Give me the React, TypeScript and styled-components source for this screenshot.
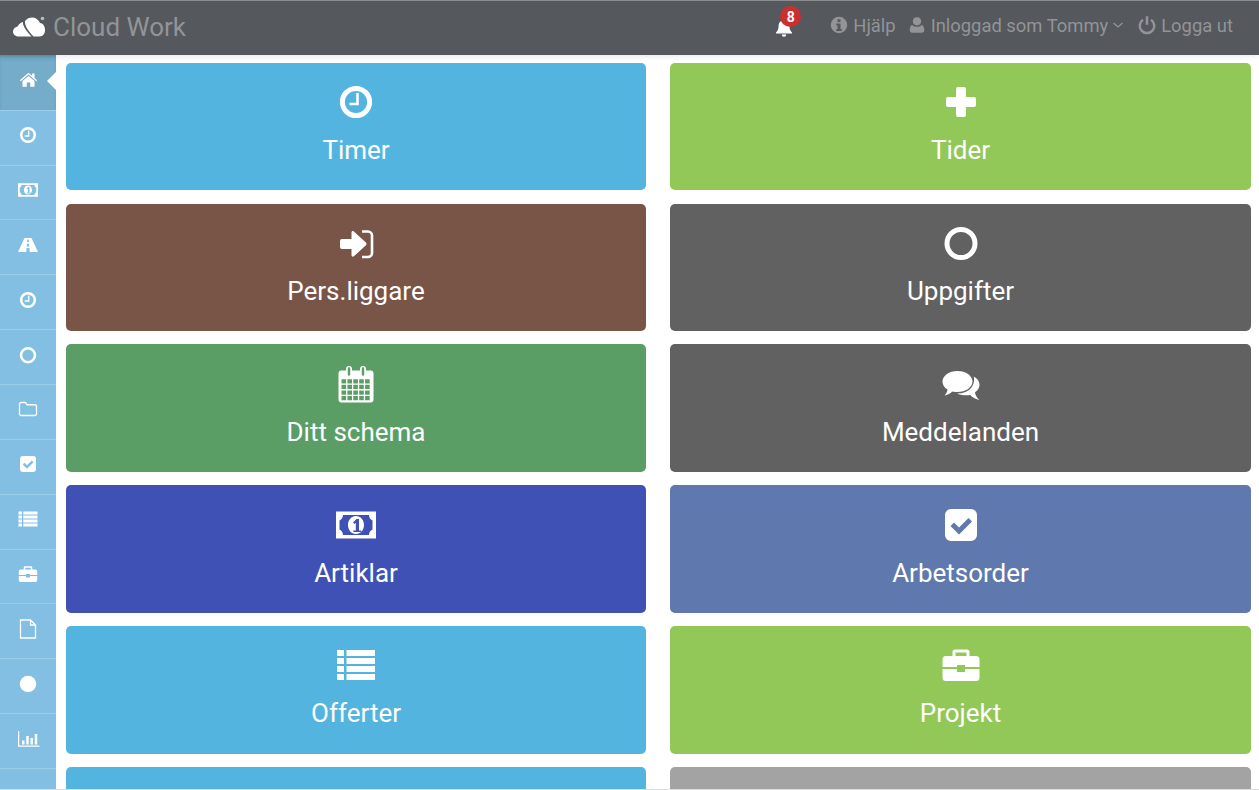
import React from "react";
import styled, { createGlobalStyle } from "styled-components";

const Global = createGlobalStyle`
  html, body { margin: 0; padding: 0; background: #fff; overflow: hidden; }
  body { font-family: Roboto, "Liberation Sans", sans-serif; }
`;

const Page = styled.div`
  width: 1259px;
  height: 790px;
  box-sizing: border-box;
  border-bottom: 1px solid #dcdcdc;
  display: flex;
  flex-direction: column;
  overflow: hidden;
`;

const Header = styled.header`
  height: 55px;
  flex: none;
  box-sizing: border-box;
  border-top: 1px solid #8b8d90;
  background: #55585d;
  display: flex;
  align-items: center;
  padding: 0 26px 2px 12px;
  color: #929497;
  box-shadow: 0 1px 7px rgba(0, 0, 0, 0.1);
  position: relative;
  z-index: 2;
`;

const Brand = styled.div`
  display: flex;
  align-items: center;
  gap: 5px;
  font-size: 26px;
  flex: 1;
`;

const Nav = styled.nav`
  display: flex;
  align-items: center;
  font-size: 18.4px;
  margin-bottom: 4px;
`;

const NavItem = styled.span<{ $gap?: number; $inner?: number }>`
  display: flex;
  align-items: center;
  gap: ${(p) => p.$inner ?? 3}px;
  margin-left: ${(p) => p.$gap ?? 11}px;
  white-space: nowrap;
`;

const BellWrap = styled.span`
  position: relative;
  display: flex;
  color: #fff;
  margin: 4px 33px 0 0;
`;

const Badge = styled.span`
  position: absolute;
  top: -10px;
  left: 7px;
  width: 21px;
  height: 21px;
  border-radius: 50%;
  background: #c9302f;
  color: #fff;
  font-size: 14px;
  font-weight: 700;
  display: flex;
  align-items: center;
  justify-content: center;
`;

const Body = styled.div`
  flex: 1;
  min-height: 0;
  display: flex;
`;

const Sidebar = styled.aside`
  width: 56px;
  flex: none;
  background: #82bfe2;
  overflow: hidden;
`;

const SideItem = styled.div<{ $active?: boolean }>`
  height: ${(p) => (p.$active ? "55.7px" : "54.87px")};
  box-sizing: border-box;
  border-bottom: 1px solid #9ccde9;
  display: flex;
  align-items: center;
  justify-content: center;
  padding-bottom: 5px;
  color: #fff;
  position: relative;
  background: ${(p) => (p.$active ? "#74acca" : "transparent")};
  box-shadow: ${(p) => (p.$active ? "inset 0 3px 4px -2px rgba(0,0,0,.22)" : "none")};
`;

const ActiveArrow = styled.span`
  position: absolute;
  right: 0;
  top: 17px;
  border-style: solid;
  border-width: 9px 9px 9px 0;
  border-color: transparent #fff transparent transparent;
`;

const Main = styled.main`
  flex: 1;
  min-width: 0;
  padding: 7.9px 8px 0 10px;
  display: grid;
  grid-template-columns: 580px 581px;
  grid-auto-rows: 127.59px;
  column-gap: 24px;
  row-gap: 13.19px;
  overflow: hidden;
`;

const Card = styled.div<{ $bg: string }>`
  background: ${(p) => p.$bg};
  border-radius: 5px;
  color: #fff;
  display: flex;
  flex-direction: column;
  align-items: center;
  padding-top: 17.5px;
  font-size: 26px;
  line-height: 30px;
  box-sizing: border-box;
`;

const CardLabel = styled.span`
  margin-top: 11px;
`;

const Svg = styled.svg`
  display: block;
  fill: currentColor;
  flex: none;
  overflow: visible;
`;

const Stroke = styled.g<{ $w: number }>`
  fill: none;
  stroke: currentColor;
  stroke-width: ${(p) => p.$w};
`;

const LogoMark = styled.circle`
  fill: #b9babc;
`;

const LogoBox = styled.span`
  display: flex;
  color: #fff;
`;

const calendarCells = (() => {
  let d = "";
  for (let r = 0; r < 4; r++) {
    for (let c = 0; c < 5; c++) {
      const x = 7.5 + c * 5.9;
      const y = 17.2 + r * 5.6;
      d += `M${x} ${y}h4.6v4.3h-4.6z`;
    }
  }
  return d;
})();

const glyphs: Record<string, React.ReactNode> = {
  home: (
    <>
      <path d="M2 23.5 22 6.5l8 6.8V8h6v10.4l6 5.1-2 2.3L22 10.6 4 25.8z" />
      <path d="M8 25.5 22 13.8l14 11.7V39H26V29h-8v10H8z" />
    </>
  ),
  clock: (
    <>
      <Stroke $w={5}>
        <circle cx="22" cy="22" r="13.6" />
      </Stroke>
      <Stroke $w={2.6}>
        <path d="M23.5 13v11h-8" />
      </Stroke>
    </>
  ),
  money: (
    <path
      fillRule="evenodd"
      d="M2 8.500h40v27H2zM9 12c0 3-2 5-3.500 5.500v9C7 27 9 29 9 32h26c0-3 2-5 3.500-5.500v-9C37 17 35 15 35 12zM22 13c4.700 0 8 4 8 9s-3.300 9-8 9-8-4-8-9 3.300-9 8-9zM19 19.500l3.500-3.500h2.500v11.500h2.300v1.500h-8v-1.500h2.500v-7.800l-1.500 1.200z"
    />
  ),
  road: (
    <path
      fillRule="evenodd"
      d="M15 8h14l13 28H25.500l-.6-8h-5.800l-.6 8H2zM20.500 11l-.4 5h3.800l-.4-5zM19.800 19.500l-.4 5.500h5.200l-.4-5.500z"
    />
  ),
  circleO: (
    <Stroke $w={5}>
      <circle cx="22" cy="22.500" r="14" />
    </Stroke>
  ),
  folder: (
    <Stroke $w={2.6}>
      <path d="M8 9h9l3 4.500h16a3 3 0 0 1 3 3V32a3 3 0 0 1-3 3H8a3 3 0 0 1-3-3V12a3 3 0 0 1 3-3z" />
    </Stroke>
  ),
  check: (
    <path
      fillRule="evenodd"
      d="M12 6h20a6 6 0 0 1 6 6v20a6 6 0 0 1-6 6H12a6 6 0 0 1-6-6V12a6 6 0 0 1 6-6zM11.500 23l3.500-3.500 5 5 9.500-9.500 3.500 3.500-13 13z"
    />
  ),
  list: (
    <path d="M3 7h7v6H3zM12.500 7H41v6H12.500zM3 15h7v6H3zM12.500 15H41v6H12.500zM3 23h7v6H3zM12.500 23H41v6H12.500zM3 31h7v6H3zM12.500 31H41v6H12.500z" />
  ),
  briefcase: (
    <path
      fillRule="evenodd"
      d="M16 6.500h12a2.500 2.500 0 0 1 2.500 2.500v4H37a3.500 3.500 0 0 1 3.500 3.500V24H26v-2h-8v2H3.500v-7.500A3.500 3.500 0 0 1 7 13h6.500V9A2.500 2.500 0 0 1 16 6.500zM16.500 9.500V13h11V9.500zM3.500 26H18v3h8v-3h14.500v8.500A3.500 3.500 0 0 1 37 38H7a3.500 3.500 0 0 1-3.500-3.500z"
    />
  ),
  file: (
    <Stroke $w={2.6}>
      <path d="M7 4h20l10 10v26H7zM27 4v10h10" />
    </Stroke>
  ),
  circle: <circle cx="22" cy="22" r="16.500" />,
  chart: (
    <>
      <path d="M2 6h2.500v29H45v2.500H2z" />
      <path d="M10 25h5v8h-5zM18.500 16h5v17h-5zM27 20h5v13h-5zM35.500 12h5v21h-5z" />
    </>
  ),
  signIn: (
    <>
      <path d="M17.500 11.500c0-1.300 1.400-1.900 2.400-1l12 11c.8.800.8 2 0 2.800l-12 11c-1 .9-2.400.3-2.400-1V28H8a2 2 0 0 1-2-2v-6a2 2 0 0 1 2-2h9.500z" />
      <Stroke $w={2.600}>
        <path d="M28 10.500h6a4 4 0 0 1 4 4V32a4 4 0 0 1-4 4h-6" />
      </Stroke>
    </>
  ),
  plus: (
    <path d="M19 7h6a2 2 0 0 1 2 2v8h8a2 2 0 0 1 2 2v6a2 2 0 0 1-2 2h-8v8a2 2 0 0 1-2 2h-6a2 2 0 0 1-2-2v-8H9a2 2 0 0 1-2-2v-6a2 2 0 0 1 2-2h8V9a2 2 0 0 1 2-2z" />
  ),
  calendar: (
    <path
      fillRule="evenodd"
      d={`M7.500 8.500h4.500V7a3 3 0 0 1 6 0v1.500h8V7a3 3 0 0 1 6 0v1.500h4.500a3 3 0 0 1 3 3v26a3 3 0 0 1-3 3h-29a3 3 0 0 1-3-3v-26a3 3 0 0 1 3-3zM13.800 6.500v6a1.200 1.200 0 0 0 2.400 0v-6a1.200 1.200 0 0 0-2.400 0zM27.800 6.500v6a1.200 1.200 0 0 0 2.400 0v-6a1.200 1.200 0 0 0-2.400 0z${calendarCells}`}
    />
  ),
  comments: (
    <>
      <path d="M18.500 9C26.800 9 33.500 13.700 33.500 19.500S26.800 30 18.500 30c-1.800 0-3.400-.2-5-.6C11 31.500 8 33 5.500 33.500c1.500-1.600 2.800-3.600 3-5.900C5.200 25.600 3.500 22.700 3.500 19.500 3.500 13.700 10.200 9 18.500 9z" />
      <path d="M34.800 14.500c3.600 1.900 5.700 5 5.700 8.300 0 3-1.700 5.700-4.500 7.500.2 2.900 2.200 5.900 4.500 7.700-3.300-.5-7.200-2.600-9.300-5-5.500.9-10.500-.2-13.200-1.600 9.600.5 18.900-5.900 16.800-16.900z" />
    </>
  ),
  bell: (
    <path d="M22 5a3 3 0 0 1 3 3v1.200c6 1.300 8 6 8 12.300 0 6 2.500 8.500 5 11.500v2H6v-2c2.500-3 5-5.500 5-11.500 0-6.300 2-11 8-12.300V8a3 3 0 0 1 3-3zM17.500 37h9a4.500 4.500 0 0 1-9 0z" />
  ),
  info: (
    <path
      fillRule="evenodd"
      d="M22 5.500a16.500 16.500 0 1 1 0 33 16.500 16.500 0 0 1 0-33zM19 10.500v5.500h6v-5.500zM16.500 19v4h2.500v7h-2.500v4h11v-4H25V19z"
    />
  ),
  user: (
    <>
      <circle cx="22" cy="14" r="9" />
      <path d="M11 22c3 3 7 4 11 4s8-1 11-4c3 1 5 5 5 11 0 4-2 6-5 6H11c-3 0-5-2-5-6 0-6 2-10 5-11z" />
    </>
  ),
  power: (
    <>
      <Stroke $w={5}>
        <path d="M30 11.500a14.500 14.500 0 1 1-16 0" />
      </Stroke>
      <path d="M19.500 4.500h5v17h-5z" />
    </>
  ),
};

const Icon = ({ name, size }: { name: string; size: number }) => (
  <Svg viewBox="0 0 44 44" width={size} height={size} aria-hidden="true">
    {glyphs[name]}
  </Svg>
);

const Logo = () => (
  <LogoBox>
    <Svg viewBox="0 0 36 24" width="36" height="24" aria-hidden="true">
      <path d="M6.500 21.500C3 21.500 1 19 1 16.500 1 14 3 12 5.500 11.500 7 9 9 7.500 11 7c-.5 3 2 7.500 8.500 14.500z" />
      <path d="M13 6c2-2.500 4.500-3.500 7-3.500 3.500 0 6.500 2 8 5.500 3.500.5 5 3.500 5 7s-1.700 6.500-5.500 6.500h-6C15.500 15.500 12.500 10 13 6z" />
      <LogoMark cx="30.500" cy="3.500" r="1.800" />
    </Svg>
  </LogoBox>
);

const Chevron = () => (
  <Svg viewBox="0 0 12 12" width="12" height="12" aria-hidden="true">
    <Stroke $w={1.3}>
      <path d="M1.500 4 6 8l4.500-4" />
    </Stroke>
  </Svg>
);

const sideIcons = [
  "home", "clock", "money", "road", "clock", "circleO", "folder",
  "check", "list", "briefcase", "file", "circle", "chart",
];

const cards = [
  { label: "Timer", icon: "clock", bg: "#54b4e0" },
  { label: "Tider", icon: "plus", bg: "#91c858" },
  { label: "Pers.liggare", icon: "signIn", bg: "#795548" },
  { label: "Uppgifter", icon: "circleO", bg: "#616161" },
  { label: "Ditt schema", icon: "calendar", bg: "#5a9e66" },
  { label: "Meddelanden", icon: "comments", bg: "#616161" },
  { label: "Artiklar", icon: "money", bg: "#3f51b5" },
  { label: "Arbetsorder", icon: "check", bg: "#5f78ad" },
  { label: "Offerter", icon: "list", bg: "#54b4e0" },
  { label: "Projekt", icon: "briefcase", bg: "#91c858" },
  { label: "", icon: "", bg: "#54b4e0" },
  { label: "", icon: "", bg: "#a3a3a3" },
];

export default function App() {
  return (
    <Page>
      <Global />
      <Header>
        <Brand>
          <Logo />
          <span>Cloud Work</span>
        </Brand>
        <Nav>
          <BellWrap>
            <Icon name="bell" size={22} />
            <Badge>8</Badge>
          </BellWrap>
          <NavItem $gap={0}>
            <Icon name="info" size={22} />
            Hjälp
          </NavItem>
          <NavItem $inner={4}>
            <Icon name="user" size={20} />
            Inloggad som Tommy
            <Chevron />
          </NavItem>
          <NavItem $gap={12}>
            <Icon name="power" size={22} />
            Logga ut
          </NavItem>
        </Nav>
      </Header>
      <Body>
        <Sidebar>
          {sideIcons.map((name, i) => (
            <SideItem key={i} $active={i === 0}>
              <Icon name={name} size={name === "home" ? 19 : 22} />
              {i === 0 && <ActiveArrow />}
            </SideItem>
          ))}
        </Sidebar>
        <Main>
          {cards.map((c, i) => (
            <Card key={i} $bg={c.bg}>
              {c.icon && <Icon name={c.icon} size={44} />}
              {c.label && <CardLabel>{c.label}</CardLabel>}
            </Card>
          ))}
        </Main>
      </Body>
    </Page>
  );
}
